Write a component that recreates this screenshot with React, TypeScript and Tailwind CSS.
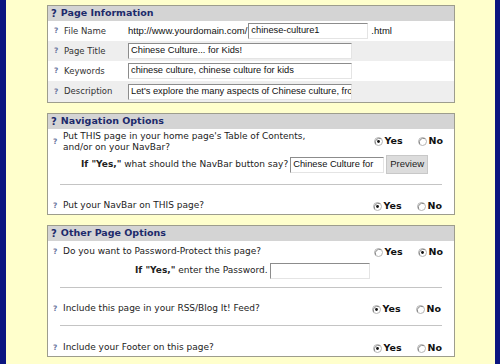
import React from "react";

function Radio({ checked }: { checked: boolean }) {
  return (
    <svg width="9" height="9" viewBox="0 0 9 9" className="shrink-0">
      <circle cx="4.5" cy="4.5" r="4" fill="#fff" stroke="#b4b4b4" strokeWidth="1" />
      <path d="M1.7 7 A4 4 0 0 1 7 1.7" fill="none" stroke="#8a8a8a" strokeWidth="1" />
      {checked ? <circle cx="4.5" cy="4.5" r="1.4" fill="#111" /> : null}
    </svg>
  );
}

function YesNo({ yes }: { yes: boolean }) {
  return (
    <div className="flex items-center shrink-0 text-[9.5px] font-bold text-[#111]">
      <span className="flex items-center gap-[1px] w-[44px]">
        <Radio checked={yes} />
        <span className="ml-[1px]">Yes</span>
      </span>
      <span className="flex items-center gap-[1px]">
        <Radio checked={!yes} />
        <span className="ml-[1px]">No</span>
      </span>
    </div>
  );
}

function Help({ big }: { big?: boolean }) {
  if (big) {
    return <span className="mr-[4px] text-[10px] font-bold text-[#1c2a6b]">?</span>;
  }
  return <span className="mr-[5px] w-[5px] text-[7.5px] font-bold text-[#6b78a0]">?</span>;
}

function Field({ value, w }: { value: string; w: string }) {
  return (
    <div
      className={`${w} h-[16px] flex items-center overflow-hidden whitespace-nowrap border-t border-l border-t-[#8c8c8c] border-l-[#8c8c8c] border-b border-r border-b-[#e4e4e4] border-r-[#e4e4e4] bg-white pl-[2px] font-['Liberation_Sans',Arial,sans-serif] text-[9.3px] text-[#111]`}
    >
      {value}
    </div>
  );
}

function Panel({ title, children }: { title: string; children: React.ReactNode }) {
  return (
    <section className="w-[408px] border border-[#9d9d8d] bg-white">
      <div className="h-[15px] flex items-center bg-[#d4d4d4] pl-[3px]">
        <Help big />
        <h2 className="text-[9.5px] font-bold text-[#1c2a6b]">{title}</h2>
      </div>
      {children}
    </section>
  );
}

function InfoRow({ label, shaded, tall, children }: { label: string; shaded?: boolean; tall?: boolean; children: React.ReactNode }) {
  return (
    <div className={`flex items-center ${tall ? "h-[21px]" : "h-[20px]"} ${shaded ? "bg-[#eeeeee]" : "bg-white"} pl-[6px]`}>
      <div className="flex items-center w-[74px] text-[8.5px] text-[#333]">
        <Help />
        {label}
      </div>
      {children}
    </div>
  );
}

const Rule = () => <div className="mx-[12px] border-t border-[#c4c4c4]" />;

export default function App() {
  return (
    <div className="flex h-[364px] w-[500px] overflow-hidden font-['DejaVu_Sans',Verdana,sans-serif]">
      <div className="w-[6px] bg-[#0b1580]" />
      <main className="flex-1 bg-[#ffffcc] pl-[41px] pt-[5px] flex flex-col gap-[10px]">
        <Panel title="Page Information">
          <InfoRow label="File Name">
            <span className="font-['Liberation_Sans',Arial,sans-serif] text-[9.5px] text-[#111] mr-[1px]">http://www.yourdomain.com/</span>
            <Field value="chinese-culture1" w="w-[120px]" />
            <span className="ml-[3px] font-['Liberation_Sans',Arial,sans-serif] text-[9.5px] text-[#111]">.html</span>
          </InfoRow>
          <InfoRow label="Page Title" shaded>
            <Field value="Chinese Culture... for Kids!" w="w-[224px]" />
          </InfoRow>
          <InfoRow label="Keywords">
            <Field value="chinese culture, chinese culture for kids" w="w-[224px]" />
          </InfoRow>
          <InfoRow label="Description" shaded tall>
            <Field value="Let's explore the many aspects of Chinese culture, from" w="w-[224px]" />
          </InfoRow>
        </Panel>

        <Panel title="Navigation Options">
          <div className="h-[25px] flex items-center pl-[5px] pr-[11px] text-[9px] text-[#222]">
            <Help />
            <p className="flex-1 leading-[11px]">
              Put THIS page in your home page's Table of Contents,
              <br />
              and/or on your NavBar?
            </p>
            <YesNo yes />
          </div>
          <div className="h-[21px] flex items-center pl-[33px] text-[9px] text-[#222]">
            <span className="mr-[2px] whitespace-nowrap">
              <b>If "Yes,"</b> what should the NavBar button say?
            </span>
            <Field value="Chinese Culture for" w="w-[94px]" />
            <button className="ml-[2px] h-[19px] w-[42px] border border-[#c8c8c8] bg-[#dcdcdc] font-['Liberation_Sans',Arial,sans-serif] text-[9.5px] text-[#222]">
              Preview
            </button>
          </div>
          <div className="mt-[9px]" />
          <Rule />
          <div className="h-[16px] mt-[13px] flex items-center pl-[5px] pr-[12px] text-[9px] text-[#222]">
            <Help />
            <p className="flex-1">Put your NavBar on THIS page?</p>
            <YesNo yes />
          </div>
        </Panel>

        <Panel title="Other Page Options">
          <div className="h-[22px] flex items-center pl-[5px] pr-[11px] text-[9px] text-[#222]">
            <Help />
            <p className="flex-1">Do you want to Password-Protect this page?</p>
            <YesNo yes={false} />
          </div>
          <div className="h-[16px] flex items-center pl-[87px] text-[9px] text-[#222]">
            <span className="mr-[2px] whitespace-nowrap">
              <b>If "Yes,"</b> enter the Password.
            </span>
            <Field value="" w="w-[100px]" />
          </div>
          <div className="mt-[8px]" />
          <Rule />
          <div className="h-[16px] mt-[13px] flex items-center pl-[5px] pr-[13px] text-[9px] text-[#222]">
            <Help />
            <p className="flex-1">Include this page in your RSS/Blog It! Feed?</p>
            <YesNo yes />
          </div>
          <div className="mt-[8px]" />
          <Rule />
          <div className="h-[16px] mt-[14px] flex items-center pl-[5px] pr-[12px] text-[9px] text-[#222]">
            <Help />
            <p className="flex-1">Include your Footer on this page?</p>
            <YesNo yes />
          </div>
        </Panel>
      </main>
      <div className="w-[5px] bg-[#0b1580]" />
    </div>
  );
}
